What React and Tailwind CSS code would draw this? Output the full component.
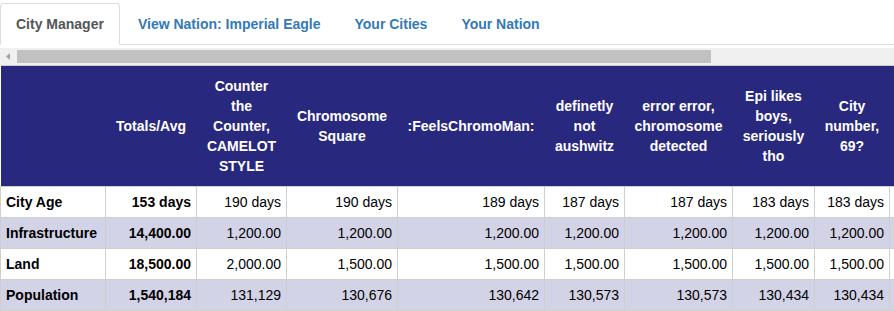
import React from 'react';

const tabs = [
  { label: 'City Manager', active: true },
  { label: 'View Nation: Imperial Eagle' },
  { label: 'Your Cities' },
  { label: 'Your Nation' },
];

// last column is only a sliver at the right edge, so it stays empty
const columns = [
  { name: '', width: 105 },
  { name: 'Totals/Avg', width: 91 },
  { name: 'Counter the Counter, CAMELOT STYLE', width: 90 },
  { name: 'Chromosome Square', width: 111 },
  { name: ':FeelsChromoMan:', width: 147 },
  { name: 'definetly not aushwitz', width: 80 },
  { name: 'error error, chromosome detected', width: 108 },
  { name: 'Epi likes boys, seriously tho', width: 82 },
  { name: 'City number, 69?', width: 75 },
  { name: '', width: 100 },
];

const rows = [
  {
    label: 'City Age',
    values: ['153 days', '190 days', '190 days', '189 days', '187 days', '187 days', '183 days', '183 days', ''],
  },
  {
    label: 'Infrastructure',
    values: ['14,400.00', '1,200.00', '1,200.00', '1,200.00', '1,200.00', '1,200.00', '1,200.00', '1,200.00', ''],
  },
  {
    label: 'Land',
    values: ['18,500.00', '2,000.00', '1,500.00', '1,500.00', '1,500.00', '1,500.00', '1,500.00', '1,500.00', ''],
  },
  {
    label: 'Population',
    values: ['1,540,184', '131,129', '130,676', '130,642', '130,573', '130,573', '130,434', '130,434', ''],
  },
];

const tableWidth = columns.reduce((sum, c) => sum + c.width, 0);

const App = () => {
  return (
    <div className="w-[894px] h-[311px] overflow-hidden bg-white font-['Liberation_Sans',Arial,sans-serif] text-[14px] leading-[20px] text-[#333]">
      {/* Tabs */}
      <ul className="flex mt-[3px] border-b border-[#ddd]">
        {tabs.map((tab) => (
          <li key={tab.label} className="mr-[2px] -mb-px">
            <span
              className={
                tab.active
                  ? 'block px-[15px] py-[10px] border border-[#ddd] border-b-transparent rounded-t-[4px] bg-white font-bold text-[#555]'
                  : 'block px-[15px] py-[10px] border border-transparent font-bold text-[#337ab7]'
              }
            >
              {tab.label}
            </span>
          </li>
        ))}
      </ul>

      {/* Top scrollbar */}
      <div className="mt-[3px] h-[17px] bg-[#f0f0f0] flex items-center">
        <div className="w-[17px] h-full flex items-center justify-center">
          <svg width="5" height="7" viewBox="0 0 5 7">
            <path d="M4 0 L0 3.5 L4 7 Z" fill="#a3a3a3" />
          </svg>
        </div>
        <div className="w-[694px] h-[13px] bg-[#c1c1c1]" />
      </div>

      {/* Table */}
      <table
        className="table-fixed border-collapse border-t border-[#ccc]"
        style={{ width: tableWidth }}
      >
        <colgroup>
          {columns.map((c, i) => (
            <col key={i} style={{ width: c.width }} />
          ))}
        </colgroup>
        <thead>
          <tr className="bg-[#29287f]">
            {columns.map((c, i) => (
              <th
                key={i}
                className="px-[8px] py-[10px] text-center align-middle font-bold text-white leading-[20px]"
              >
                {c.name}
              </th>
            ))}
          </tr>
        </thead>
        <tbody>
          {rows.map((row, r) => (
            <tr key={row.label} className={r % 2 === 1 ? 'bg-[#d3d3e8]' : 'bg-white'}>
              <td className="border border-[#cfcfcf] px-[5px] py-[5px] text-left font-bold text-black whitespace-nowrap">
                {row.label}
              </td>
              {row.values.map((v, i) => (
                <td
                  key={i}
                  className={
                    i === 0
                      ? 'border border-[#cfcfcf] px-[5px] py-[5px] text-right font-bold text-black whitespace-nowrap'
                      : 'border border-[#cfcfcf] px-[5px] py-[5px] text-right text-black whitespace-nowrap'
                  }
                >
                  {v}
                </td>
              ))}
            </tr>
          ))}
        </tbody>
      </table>
    </div>
  );
};

export default App;
